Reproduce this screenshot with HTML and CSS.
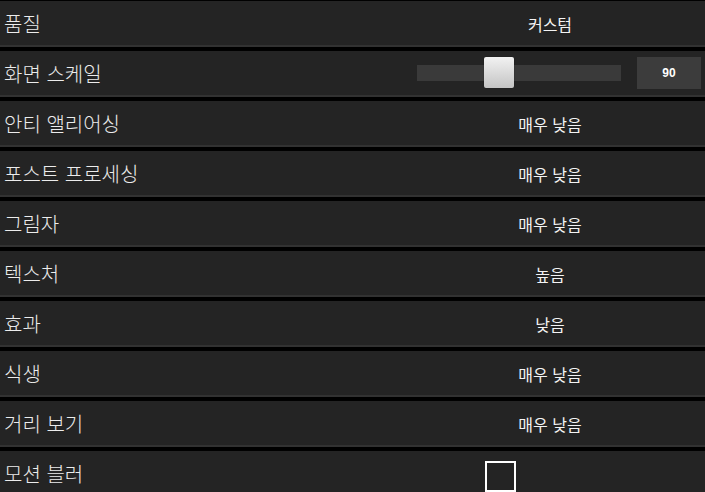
FILE: index.html
```html
<!DOCTYPE html>
<html lang="ko">
<head>
  <meta charset="UTF-8">
  <meta name="viewport" content="width=device-width, initial-scale=1.0">
  <title>그래픽 설정</title>
  <link rel="stylesheet" href="styles.css">
</head>
<body>
  <div class="settings">
    <div class="row">
      <div class="label">품질</div>
      <div class="value">커스텀</div>
    </div>

    <div class="row">
      <div class="label">화면 스케일</div>
      <div class="control slider-control">
        <div class="track">
          <div class="knob" style="left: 67px"></div>
        </div>
        <div class="number">90</div>
      </div>
    </div>

    <div class="row">
      <div class="label">안티 앨리어싱</div>
      <div class="value">매우 낮음</div>
    </div>

    <div class="row">
      <div class="label">포스트 프로세싱</div>
      <div class="value">매우 낮음</div>
    </div>

    <div class="row">
      <div class="label">그림자</div>
      <div class="value">매우 낮음</div>
    </div>

    <div class="row">
      <div class="label">텍스처</div>
      <div class="value">높음</div>
    </div>

    <div class="row">
      <div class="label">효과</div>
      <div class="value">낮음</div>
    </div>

    <div class="row">
      <div class="label">식생</div>
      <div class="value">매우 낮음</div>
    </div>

    <div class="row">
      <div class="label">거리 보기</div>
      <div class="value">매우 낮음</div>
    </div>

    <div class="row">
      <div class="label">모션 블러</div>
      <div class="control check-control">
        <div class="checkbox"></div>
      </div>
    </div>
  </div>
</body>
</html>
```

FILE: styles.css
```css
:root {
  --color-gap: #000000;
  --color-row: #242424;
  --color-row-edge: #323232;
  --color-label: #ececec;
  --color-value: #f4f4f4;
  --color-track: #3a3a3a;
  --color-box: #3c3c3c;
  --font-ko: "Noto Sans CJK KR", "Noto Sans", sans-serif;
}

* {
  margin: 0;
  padding: 0;
  box-sizing: border-box;
}

html,
body {
  background-color: var(--color-gap);
  overflow: hidden;
}

body {
  font-family: var(--font-ko);
  width: 705px;
  height: 492px;
}

.settings {
  padding-top: 1px;
  display: flex;
  flex-direction: column;
  gap: 4px;
}

.row {
  display: grid;
  grid-template-columns: 395px 310px;
  height: 46px;
  background-color: var(--color-row);
  border-bottom: 2px solid var(--color-row-edge);
}

.label {
  display: flex;
  align-items: center;
  padding-left: 4px;
  font-size: 20px;
  font-weight: 300;
  color: var(--color-label);
}

.value {
  display: flex;
  align-items: center;
  justify-content: center;
  font-size: 16px;
  color: var(--color-value);
  padding-top: 2px;
}

.control {
  display: flex;
  align-items: center;
}

/* slider: track + numeric box */
.slider-control {
  padding-left: 22px;
  gap: 16px;
}

.track {
  position: relative;
  width: 204px;
  height: 16px;
  background-color: var(--color-track);
}

.knob {
  position: absolute;
  top: -8px;
  width: 30px;
  height: 31px;
  border-radius: 2px;
  background: linear-gradient(#f2f2f2, #c4c4c4);
  box-shadow: 0 0 1px rgba(0, 0, 0, 0.6);
}

.number {
  width: 64px;
  height: 32px;
  display: flex;
  align-items: center;
  justify-content: center;
  background-color: var(--color-box);
  font-family: "Liberation Sans", Arial, sans-serif;
  font-weight: 700;
  font-size: 12px;
  color: #ffffff;
}

/* motion blur toggle */
.check-control {
  padding-left: 90px;
  padding-top: 7px;
}

.checkbox {
  width: 31px;
  height: 31px;
  border: 2px solid #ffffff;
}
```
